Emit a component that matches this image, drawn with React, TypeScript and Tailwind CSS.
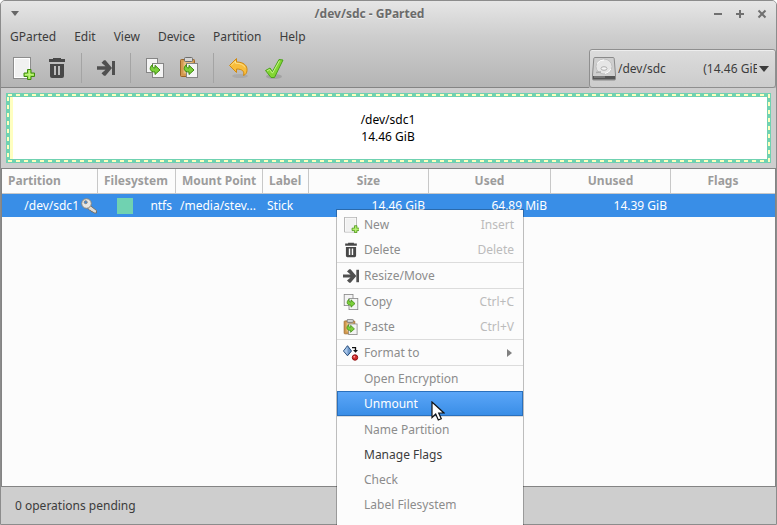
import React from "react";

type IconProps = { className?: string; viewBox?: string };

function NewIcon({ className = "size-6", viewBox = "0 0 24 24" }: IconProps) {
  return (
    <svg viewBox={viewBox} className={className} aria-hidden="true">
      <rect x="2.5" y="1.5" width="17" height="21" fill="#f1f1f1" stroke="#8d8d8d" />
      <rect x="3.5" y="2.5" width="15" height="19" fill="none" stroke="#fff" />
      <path d="M16.5 13.5h3.500v3.500h3.500v3.500h-3.500v3h-3.500v-3H13v-3.500h3.500z" fill="#9be34a" stroke="#3f8a10" />
      <path d="M18.300 14.500v8M14 18.700h8.500" stroke="#c6f58c" />
    </svg>
  );
}

function TrashIcon({ className = "size-6", viewBox = "0 0 24 24" }: IconProps) {
  return (
    <svg viewBox={viewBox} className={className} aria-hidden="true">
      <path d="M4 6V3h4V2h8v1h4v3z" fill="#484848" />
      <path fillRule="evenodd" d="M5 8h14v12a2 2 0 0 1-2 2H7a2 2 0 0 1-2-2zM9 10v9h2v-9zM13 10v9h2v-9z" fill="#484848" />
    </svg>
  );
}

function ResizeIcon({ className = "size-6", viewBox = "0 0 24 24" }: IconProps) {
  return (
    <svg viewBox={viewBox} className={className} aria-hidden="true">
      <path d="M3 10.300h8.500L7.500 6.800 10 4.300h1.500L18 12l-6.500 7.700H10l-2.500-2.500 4-3.500H3z" fill="#505050" />
      <rect x="18" y="5" width="3" height="14" fill="#505050" />
    </svg>
  );
}

function CopyArrow() {
  return (
    <path
      d="M9.500 8.500c-.5 2.500.5 3.500 2.500 3.500V9.300l5 4.700-5 4.500V16c-5 .2-6.500-4-2.500-7.500z"
      fill="#7bd03a"
      stroke="#3f8a10"
      strokeLinejoin="round"
    />
  );
}

function CopyIcon({ className = "size-6", viewBox = "0 0 24 24" }: IconProps) {
  return (
    <svg viewBox={viewBox} className={className} aria-hidden="true">
      <rect x="3.500" y="2.500" width="11" height="14" fill="#f4f4f4" stroke="#858585" />
      <rect x="9.500" y="7.500" width="11" height="14" fill="#f4f4f4" stroke="#858585" />
      <CopyArrow />
    </svg>
  );
}

function PasteIcon({ className = "size-6", viewBox = "0 0 24 24" }: IconProps) {
  return (
    <svg viewBox={viewBox} className={className} aria-hidden="true">
      <rect x="3.500" y="3.500" width="14" height="17" rx="1" fill="#d39a4f" stroke="#9a6526" />
      <rect x="6.500" y="5.500" width="9" height="12" fill="#e6bd80" />
      <rect x="7.500" y="1.500" width="8" height="4" rx="1" fill="#d5d5d5" stroke="#6d6d6d" />
      <rect x="9.500" y="7.500" width="11" height="14" fill="#f4f4f4" stroke="#858585" />
      <CopyArrow />
    </svg>
  );
}

function UndoIcon() {
  return (
    <svg viewBox="0 0 24 24" className="size-6" aria-hidden="true">
      <ellipse cx="14" cy="20" rx="8" ry="2" fill="#000" opacity="0.080" />
      <path
        d="M3.500 9.500 10.500 2.500V6c7 0 11 3.500 10.500 8.500-.2 2.500-1.200 4-3.500 5 1.200-4-1-6.500-7-6.500v3.500z"
        fill="#f8bd3c"
        stroke="#d08a12"
        strokeLinejoin="round"
      />
      <path d="M5 9.500 9.500 5v2.200c5 0 8 1.500 9.500 4.300" fill="none" stroke="#ffe28c" />
    </svg>
  );
}

function ApplyIcon() {
  return (
    <svg viewBox="0 0 24 24" className="size-6" aria-hidden="true">
      <ellipse cx="12" cy="20.500" rx="8" ry="2.500" fill="#000" opacity="0.120" />
      <path
        d="M3.500 14.500 8 12l2.500 3.500L17 3.500l4 .5-8.500 17.500H9z"
        fill="#83d633"
        stroke="#4ba31a"
        strokeLinejoin="round"
      />
      <path d="m5 15 2.500-1.500 3 3.700L17.500 4.700" fill="none" stroke="#c4f58a" />
    </svg>
  );
}

function DriveIcon() {
  return (
    <svg viewBox="0 0 24 24" className="size-6 shrink-0" aria-hidden="true">
      <path d="M3 .5h18q1 0 1.200 1L23.500 18v4q0 1-1 1h-21q-1 0-1-1v-4L1.800 1.500Q2 .5 3 .5z" fill="#cfcfcf" stroke="#8a8a8a" />
      <path d="M1 19h22v3.500H1z" fill="#555" />
      <path d="M2 20h11" stroke="#999" />
      <ellipse cx="12" cy="9.500" rx="8" ry="7.500" fill="#e6e6e6" stroke="#c0c0c0" />
      <path d="M5 6.500Q8 2.500 12 3M19 12q-2 4-6 4.500" fill="none" stroke="#fff" />
      <ellipse cx="12" cy="11.500" rx="3" ry="1.800" fill="#f4f4f4" stroke="#b0b0b0" />
      <path d="m4 15.500 5-.5" stroke="#aaa" strokeWidth="1.500" />
    </svg>
  );
}

function FormatIcon({ className = "size-4" }: IconProps) {
  return (
    <svg viewBox="0 0 16 16" className={className} aria-hidden="true">
      <path d="M4.500.7 8.500 6l-4 4.800L.5 6z" fill="#6f98ca" stroke="#244a78" />
      <path d="M4.500 1.500V10L1 6z" fill="#a9c6e8" />
      <path d="M9 2.700h3.500V6" fill="none" stroke="#111" strokeWidth="1.300" />
      <path d="M10 5h5l-2.500 2.800z" fill="#111" />
      <circle cx="12" cy="12.500" r="2.700" fill="#d42a2a" stroke="#8c0c0c" />
      <circle cx="11.300" cy="11.700" r="0.900" fill="#ff9a9a" />
    </svg>
  );
}

function KeyIcon() {
  return (
    <svg viewBox="0 0 16 16" className="size-4" aria-hidden="true">
      <path d="m8.500 7 7 5.500v2.500H13l-1-1.200-1.200.2-1-1.500-1.300-.2L6.500 10z" fill="#dedbd4" stroke="#77736a" />
      <circle cx="5.500" cy="5.500" r="4.800" fill="#e8e6e2" stroke="#8b877e" />
      <circle cx="4.700" cy="4.200" r="1.500" fill="#3b8ce6" stroke="#8b877e" />
    </svg>
  );
}

function Pointer() {
  return (
    <svg viewBox="0 0 14 21" className="pointer-events-none absolute left-[94px] top-[191px] z-10 h-[21px] w-[14px]" aria-hidden="true">
      <path d="M1 1v15.500l3.700-3.500 2.600 6 3-1.300-2.600-5.700H13z" fill="#fff" stroke="#111" strokeWidth="1.200" />
    </svg>
  );
}

const menus = ["GParted", "Edit", "View", "Device", "Partition", "Help"];

function ToolButton({ label, children }: { label: string; children: React.ReactNode }) {
  return (
    <button type="button" aria-label={label} title={label} className="flex h-9 w-[34px] items-center justify-center">
      {children}
    </button>
  );
}

function ToolSeparator() {
  return <div className="mx-[7px] h-[30px] w-px bg-[#a4a4a4]" />;
}

function TitleBar() {
  return (
    <header className="flex h-[25px] items-center pl-2 pr-2 text-[#6b6b6b]">
      <button type="button" aria-label="Window menu" className="flex size-3 items-center justify-center">
        <svg viewBox="0 0 8 5" className="h-[5px] w-2"><path d="M0 0h8L4 5z" fill="#666" /></svg>
      </button>
      <h1 className="flex-1 pl-1.5 text-center font-bold [text-shadow:0_1px_0_#f0f0f0]">/dev/sdc - GParted</h1>
      <div className="flex items-center justify-end gap-2.5">
        <button type="button" aria-label="Minimize" className="size-3">
          <svg viewBox="0 0 12 12" className="size-3"><path d="M2 6h8" stroke="#707070" strokeWidth="2" /></svg>
        </button>
        <button type="button" aria-label="Maximize" className="size-3">
          <svg viewBox="0 0 12 12" className="size-3"><path d="M2 6h8M6 2v8" stroke="#707070" strokeWidth="2" /></svg>
        </button>
        <button type="button" aria-label="Close" className="size-3">
          <svg viewBox="0 0 12 12" className="size-3"><path d="m2.500 2.500 7 7m0-7-7 7" stroke="#707070" strokeWidth="2" /></svg>
        </button>
      </div>
    </header>
  );
}

function Toolbar() {
  return (
    <div className="flex h-[39px] items-stretch">
      <div className="flex flex-1 items-center border-b border-[#848484] pl-[5px]">
        <ToolButton label="New"><NewIcon /></ToolButton>
        <ToolButton label="Delete"><TrashIcon /></ToolButton>
        <ToolSeparator />
        <ToolButton label="Resize/Move"><ResizeIcon /></ToolButton>
        <ToolSeparator />
        <ToolButton label="Copy"><CopyIcon /></ToolButton>
        <ToolButton label="Paste"><PasteIcon /></ToolButton>
        <ToolSeparator />
        <div className="flex gap-0.5">
          <ToolButton label="Undo"><UndoIcon /></ToolButton>
          <ToolButton label="Apply"><ApplyIcon /></ToolButton>
        </div>
      </div>
      <label className="flex w-[187px] items-center rounded-[3px] border border-[#8f8f8f] bg-linear-to-b from-[#dcdcdc] to-[#cccccc] pl-0.5 pr-1.5 shadow-[inset_0_1px_0_#eeeeee]">
        <DriveIcon />
        <span className="sr-only">Device</span>
        <select className="ml-0.5 h-6 w-[139px] appearance-none overflow-hidden bg-transparent">
          <option>{"/dev/sdc" + "\u00a0".repeat(12) + "(14.46 GiB)"}</option>
        </select>
        <svg viewBox="0 0 10 6" className="ml-auto h-1.5 w-2.5 shrink-0" aria-hidden="true"><path d="M0 0h10L5 6z" fill="#3c3c3c" /></svg>
      </label>
    </div>
  );
}

function PartitionMap() {
  return (
    <div className="px-[5px] pb-[5px] pt-[5px]">
      <div className="bg-[#70d2b1] p-px">
        <div className="p-[3px] [background:repeating-linear-gradient(90deg,#70d2b1_0_1px,#ffffc0_1px_5px,#70d2b1_5px_8px)_top/100%_2px_no-repeat,repeating-linear-gradient(90deg,#70d2b1_0_1px,#ffffc0_1px_5px,#70d2b1_5px_8px)_bottom/100%_2px_no-repeat,repeating-linear-gradient(#70d2b1_0_3px,#ffffc0_3px_7px,#70d2b1_7px_8px)_left/2px_100%_no-repeat,repeating-linear-gradient(#ffffc0_0_4px,#70d2b1_4px_8px)_right/2px_100%_no-repeat]">
          <div className="flex h-[62px] flex-col items-center justify-center border-l-[3px] border-[#ffffc0] bg-white pr-1 leading-[17px] text-black">
            <span>/dev/sdc1</span>
            <span>14.46 GiB</span>
          </div>
        </div>
      </div>
    </div>
  );
}

const head = "border-r border-[#c8c8c8] p-0 font-bold";

function PartitionTable() {
  return (
    <main className="flex-1 border border-[#848484] bg-[#fcfcfc]">
      <table className="w-full table-fixed border-separate border-spacing-0">
        <colgroup>
          <col className="w-24" />
          <col className="w-[78px]" />
          <col className="w-[87px]" />
          <col className="w-[46px]" />
          <col className="w-[120px]" />
          <col className="w-[122px]" />
          <col className="w-[120px]" />
          <col />
        </colgroup>
        <thead className="h-[25px] text-[#9c9c9c] [&_th]:border-b">
          <tr>
            <th className={`${head} pl-1.5 text-left`}>Partition</th>
            <th className={`${head} pl-1.5 text-left`}>Filesystem</th>
            <th className={`${head} whitespace-nowrap pl-1.5 text-left`}>Mount Point</th>
            <th className={`${head} pl-1.5 text-left`}>Label</th>
            <th className={head}>Size</th>
            <th className={head}>Used</th>
            <th className={head}>Unused</th>
            <th className="border-[#c8c8c8] p-0 font-bold">Flags</th>
          </tr>
        </thead>
        <tbody>
          <tr className="h-[23px] bg-[#398ee7] text-white">
            <td className="p-0">
              <div className="flex items-center justify-end gap-0.5 pr-px">/dev/sdc1<KeyIcon /></div>
            </td>
            <td className="p-0">
              <div className="flex items-center justify-between pl-[19px] pr-1">
                <span className="size-4 bg-[#70d2b1]" />ntfs
              </div>
            </td>
            <td className="whitespace-nowrap p-0 pl-1">/media/stev...</td>
            <td className="p-0 pl-1">Stick</td>
            <td className="p-0 pr-1 text-right">14.46 GiB</td>
            <td className="p-0 pr-1 text-right">64.89 MiB</td>
            <td className="p-0 pr-1 text-right">14.39 GiB</td>
            <td className="p-0" />
          </tr>
        </tbody>
      </table>
    </main>
  );
}

type Item = {
  label: string;
  icon?: React.ReactNode;
  keys?: string;
  state?: "active" | "enabled";
  submenu?: boolean;
};

const groups: Item[][] = [
  [
    { label: "New", icon: <NewIcon className="size-4" viewBox="0 1 23 23" />, keys: "Insert" },
    { label: "Delete", icon: <TrashIcon className="size-4" viewBox="1 1 22 22" />, keys: "Delete" },
  ],
  [{ label: "Resize/Move", icon: <ResizeIcon className="size-4" viewBox="3 3 18 18" /> }],
  [
    { label: "Copy", icon: <CopyIcon className="size-4" viewBox="2 2 20 20" />, keys: "Ctrl+C" },
    { label: "Paste", icon: <PasteIcon className="size-4" viewBox="2 1 21 21" />, keys: "Ctrl+V" },
  ],
  [{ label: "Format to", icon: <FormatIcon />, submenu: true }],
  [{ label: "Open Encryption" }, { label: "Unmount", state: "active" }],
  [
    { label: "Name Partition" },
    { label: "Manage Flags", state: "enabled" },
    { label: "Check" },
    { label: "Label Filesystem" },
  ],
];

function MenuRow({ item }: { item: Item }) {
  const tone =
    item.state === "active"
      ? "border border-[#2a70bd] bg-linear-to-b from-[#5ba6f8] to-[#398ee7] pl-[5px] pr-2 text-white"
      : item.state === "enabled"
        ? "pl-1.5 pr-[9px] text-[#3c3c3c]"
        : "pl-1.5 pr-[9px] text-[#8c8c8c]";
  return (
    <button type="button" role="menuitem" className={`flex h-[25px] w-full items-center ${tone}`}>
      <span className="mr-[5px] flex size-4">{item.icon}</span>
      <span className="flex-1 text-left">{item.label}</span>
      {item.keys && <span className="text-[#bbbbbb]">{item.keys}</span>}
      {item.submenu && (
        <svg viewBox="0 0 5 8" className="mr-0.5 h-2 w-[5px]" aria-hidden="true"><path d="M0 0v8l5-4z" fill="#808080" /></svg>
      )}
    </button>
  );
}

function ContextMenu() {
  return (
    <div role="menu" className="absolute left-[336px] top-[209px] w-[188px] border border-black/25 bg-[#fcfcfc] bg-clip-padding pb-6 pt-0.5">
      {groups.map((group, i) => (
        <div key={i} className={i > 0 ? "border-t border-[#dcdcdc]" : ""}>
          {group.map((item) => <MenuRow key={item.label} item={item} />)}
        </div>
      ))}
      <Pointer />
    </div>
  );
}

export default function App() {
  return (
    <div className="relative h-screen overflow-hidden bg-white font-['Noto_Sans',sans-serif] text-[12px] leading-4 text-[#3c3c3c]">
      <div className="flex h-full flex-col overflow-hidden rounded-t-[5px] border border-[#8c8c8c] bg-[#cecece]">
        <div className="bg-linear-to-b from-[#e6e6e6] from-0% via-[#cecece] via-40% to-[#b4b4b4]">
          <TitleBar />
          <nav className="mb-px flex h-[22px] items-center gap-[18px] pl-[9px]">
            {menus.map((name) => <button type="button" key={name}>{name}</button>)}
          </nav>
          <Toolbar />
        </div>
        <PartitionMap />
        <PartitionTable />
        <footer className="flex h-[37px] items-center px-3.5">0 operations pending</footer>
      </div>
      <ContextMenu />
    </div>
  );
}
